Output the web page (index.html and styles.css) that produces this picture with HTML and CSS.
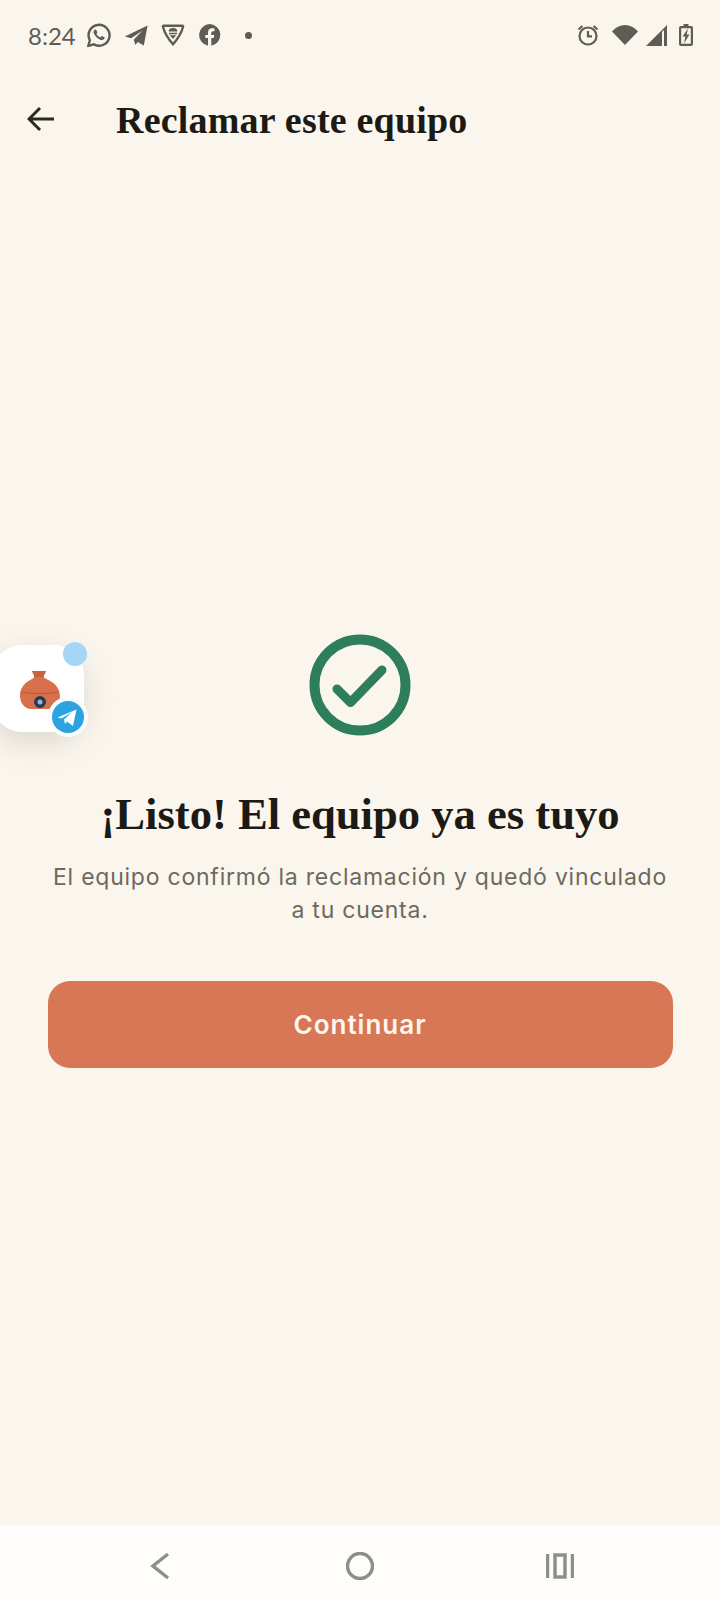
FILE: index.html
```html
<!DOCTYPE html>
<html lang="es">

<head>
  <meta charset="UTF-8">
  <meta name="viewport" content="width=device-width, initial-scale=1.0">
  <title>Reclamar este equipo</title>
  <link rel="stylesheet" href="styles.css">
</head>

<body>
  <div class="page">
    <div class="status-bar">
      <div class="status-left">
        <span class="time">8:24</span>
        <svg class="status-icon" viewBox="1 1 22 22" width="24" height="24">
          <path class="line" d="M2.2 22l1.4-5.2A9.6 9.6 0 1 1 7.300 20.600z" />
          <path class="fill" d="M8.700 6.900c-.4 0-1 .2-1.300.9-.5 1.100-.4 2.300.3 3.600 1.200 2.200 3 3.900 5.400 4.900 1.400.5 2.600.4 3.400-.3.500-.5.700-1.100.7-1.700 0-.3-2.200-1.400-2.600-1.400-.3 0-.8 1-1.200 1.200-.8.100-3.300-1.800-3.700-3.100 0-.3.800-.8.800-1.300 0-.4-.9-2.800-1.800-2.800z" />
        </svg>
        <svg class="status-icon" viewBox="0 0 24 24" width="24" height="24">
          <path class="fill" d="M.8 13.600L23.600 2.500 19.800 22.500 13.800 18.900 11.400 22 9.700 16.800 18.200 7.700 7.200 15.300z" />
        </svg>
        <svg class="status-icon" viewBox="1 1 22 22" width="24" height="24">
          <path class="line" d="M2.800 4.500c-.3-.6 0-1 .6-1h17.200c.6 0 .9.400.6 1C19.800 10 16.500 15.500 12 20.500 7.500 15.500 4.200 10 2.800 4.500z" />
          <path class="fill" d="M8 8.700a4 3.200 0 0 1 8 0zM8.300 9.900h7.400v1.300H8.300zM9 12.200h6l-3 3.500z" />
        </svg>
        <svg class="status-icon" viewBox="0 0 24 24" width="24" height="24">
          <path class="fill" d="M12 1a11 11 0 0 0-2 21.800v-7.700H7.300V12H10V9.600c0-2.800 1.600-4.300 4.100-4.300 1.200 0 2.400.2 2.400.2v2.700h-1.400c-1.300 0-1.800.8-1.800 1.700V12h3l-.5 3.100h-2.500v7.700A11 11 0 0 0 12 1z" />
        </svg>
        <span class="status-dot"></span>
      </div>
      <div class="status-right">
        <svg class="status-icon" viewBox="0 0 24 24" width="24" height="24">
          <circle class="line" cx="12" cy="13" r="8.500" />
          <path class="line" d="M12 8v5.300h4M2.500 6.500l4-3.500M21.500 6.500l-4-3.500" />
        </svg>
        <svg class="wifi" viewBox="0 0 26 22" width="26" height="22">
          <path class="fill" d="M0 7.500C3.500 3.200 8 1 13 1s9.500 2.200 13 6.500L13 21z" />
        </svg>
        <svg class="signal" viewBox="0 0 21 21" width="21" height="21">
          <path class="fill" d="M0 21L21 0v21h-3V5L16 7v14z" />
        </svg>
        <svg class="battery" viewBox="0 0 14 22" width="14" height="22">
          <path class="fill" fill-rule="evenodd" d="M4.500 0h5v2H12a2 2 0 0 1 2 2v16a2 2 0 0 1-2 2H2a2 2 0 0 1-2-2V4a2 2 0 0 1 2-2h2.500zM2.200 4.200v15.600h9.600V4.200z" />
          <path class="fill" d="M9 4.500L3.500 12.500h2.800L5 19.500 10.500 10.500H7.700z" />
        </svg>
      </div>
    </div>

    <header class="top-bar">
      <svg class="back-arrow" viewBox="0 0 28 26" width="28" height="26">
        <path d="M27 13H2M13 2L2 13l11 11" />
      </svg>
      <h1 class="top-title">Reclamar este equipo</h1>
    </header>

    <main class="content">
      <svg class="check" viewBox="0 0 102 102" width="102" height="102">
        <circle cx="51" cy="51" r="45.500" />
        <path d="M28 55l13.500 13.500L73 36" />
      </svg>
      <h2 class="heading">¡Listo! El equipo ya es tuyo</h2>
      <p class="message">El equipo confirmó la reclamación y quedó vinculado a tu cuenta.</p>
      <button class="continue">Continuar</button>
    </main>

    <nav class="nav-bar">
      <svg viewBox="0 0 28 28" width="28" height="28">
        <path d="M22 2L7 14l15 12" />
      </svg>
      <svg viewBox="0 0 28 28" width="28" height="28">
        <circle cx="14" cy="14" r="12.500" />
      </svg>
      <svg viewBox="0 0 28 28" width="28" height="28">
        <path d="M1.500 2v24M26.500 2v24M9 3h10v22H9z" />
      </svg>
    </nav>
  </div>

  <div class="bubble">
    <svg class="pot" viewBox="0 0 44 40" width="44" height="40">
      <path class="pot-neck" d="M14 0h14l-1 3-1 1v5H16V4l-1-1z" />
      <path class="pot-body" d="M17 6h8c1 2 17 5 17 19 0 7-5 13-11 13H13C7 38 2 32 2 25 2 11 16 8 17 6z" />
      <path class="pot-seam" d="M3 21c10 2 28 2 38 0" />
      <circle class="pot-ring" cx="22" cy="31" r="6" />
      <circle class="pot-eye" cx="22" cy="31" r="2.500" />
    </svg>
    <span class="bubble-dot"></span>
    <span class="bubble-badge">
      <svg viewBox="0 0 32 32" width="32" height="32">
        <circle cx="16" cy="16" r="16" fill="#2ca3e0" />
        <path fill="#fff" d="M5.500 16.500L24.500 8.500 21 25l-6-4.500-2 2.500-1-4.500 8-7.500-10.500 6.500z" />
      </svg>
    </span>
  </div>
</body>

</html>
```

FILE: styles.css
```css
:root {
  --background-color: #faf6ee;
  --ink-color: #1c1a14;
  --muted-color: #6d695e;
  --status-color: #5f5c55;
  --accent-color: #d87756;
  --green-color: #2e7d5b;
}

* {
  box-sizing: border-box;
}

body {
  margin: 0;
  padding: 0;
  background-color: var(--background-color);
  font-family: "Inter", "Liberation Sans", sans-serif;
}

.page {
  display: flex;
  flex-direction: column;
  height: 1600px;
}

/* status bar */
.status-bar {
  display: flex;
  align-items: center;
  justify-content: space-between;
  height: 70px;
  padding: 0 27px 0 28px;
  color: var(--status-color);
}

.status-left,
.status-right {
  display: flex;
  align-items: center;
}

.time {
  width: 59px;
  font-family: "Lato", sans-serif;
  font-size: 24px;
  color: var(--status-color);
}

.status-left .status-icon {
  margin-right: 13px;
}

.status-dot {
  width: 7px;
  height: 7px;
  margin-left: 10px;
  border-radius: 50%;
  background-color: var(--status-color);
}

.status-right .status-icon {
  margin-right: 12px;
}

.wifi {
  margin-right: 8px;
}

.signal {
  margin-right: 12px;
}

.line {
  fill: none;
  stroke: var(--status-color);
  stroke-width: 2.2;
}

.fill {
  fill: var(--status-color);
}

/* header */
.top-bar {
  display: flex;
  align-items: center;
  height: 98px;
  padding-left: 27px;
}

.back-arrow {
  margin-right: 61px;
  fill: none;
  stroke: #2b2920;
  stroke-width: 3;
}

.top-title {
  margin: 2px 0 0 0;
  font-family: "Liberation Serif", serif;
  font-size: 38px;
  letter-spacing: 0.2px;
  font-weight: 700;
  color: var(--ink-color);
}

/* center block */
.content {
  flex: 1;
  display: flex;
  flex-direction: column;
  align-items: center;
  justify-content: center;
  padding: 8px 47px 0 47px;
}

.check {
  margin-bottom: 50px;
  fill: none;
  stroke: var(--green-color);
}

.check circle {
  stroke-width: 10;
}

.check path {
  stroke-width: 9;
  stroke-linecap: round;
  stroke-linejoin: round;
}

.heading {
  margin: 0 0 19px 0;
  font-family: "Liberation Serif", serif;
  font-size: 44.6px;
  line-height: 56px;
  font-weight: 700;
  color: var(--ink-color);
}

.message {
  width: 626px;
  margin: 0 0 54px 0;
  font-size: 23px;
  line-height: 33px;
  letter-spacing: 0.77px;
  text-align: center;
  color: var(--muted-color);
}

.continue {
  width: 625px;
  height: 87px;
  border: none;
  border-radius: 22px;
  background-color: var(--accent-color);
  color: #fdf8f1;
  font-family: "Inter", sans-serif;
  font-size: 26px;
  font-weight: 600;
  letter-spacing: 1px;
}

/* android nav */
.nav-bar {
  display: flex;
  align-items: center;
  justify-content: space-between;
  height: 74px;
  padding: 6px 146px 0 146px;
  background-color: #fefdfb;
}

.nav-bar svg {
  fill: none;
  stroke: #8e8e8c;
  stroke-width: 3.5;
}

/* floating bubble */
.bubble {
  position: absolute;
  left: -8px;
  top: 645px;
  display: flex;
  align-items: center;
  justify-content: center;
  width: 92px;
  height: 87px;
  border-radius: 30px;
  background-color: #fff;
  box-shadow: 0 10px 30px rgba(90, 80, 60, 0.18);
}

.pot {
  margin-top: 4px;
  margin-left: 4px;
}

.pot-neck {
  fill: #c9623f;
}

.pot-body {
  fill: #d9704c;
}

.pot-seam {
  fill: none;
  stroke: #b9573a;
  stroke-width: 1;
}

.pot-ring {
  fill: #2a3a55;
}

.pot-eye {
  fill: #9fb4cc;
}

.bubble-dot {
  position: absolute;
  top: -3px;
  right: -3px;
  width: 24px;
  height: 24px;
  border-radius: 50%;
  background-color: #a6d6f5;
}

.bubble-badge {
  position: absolute;
  right: -4px;
  bottom: -5px;
  display: flex;
  padding: 4px;
  border-radius: 50%;
  background-color: #f7fbfd;
}
```
